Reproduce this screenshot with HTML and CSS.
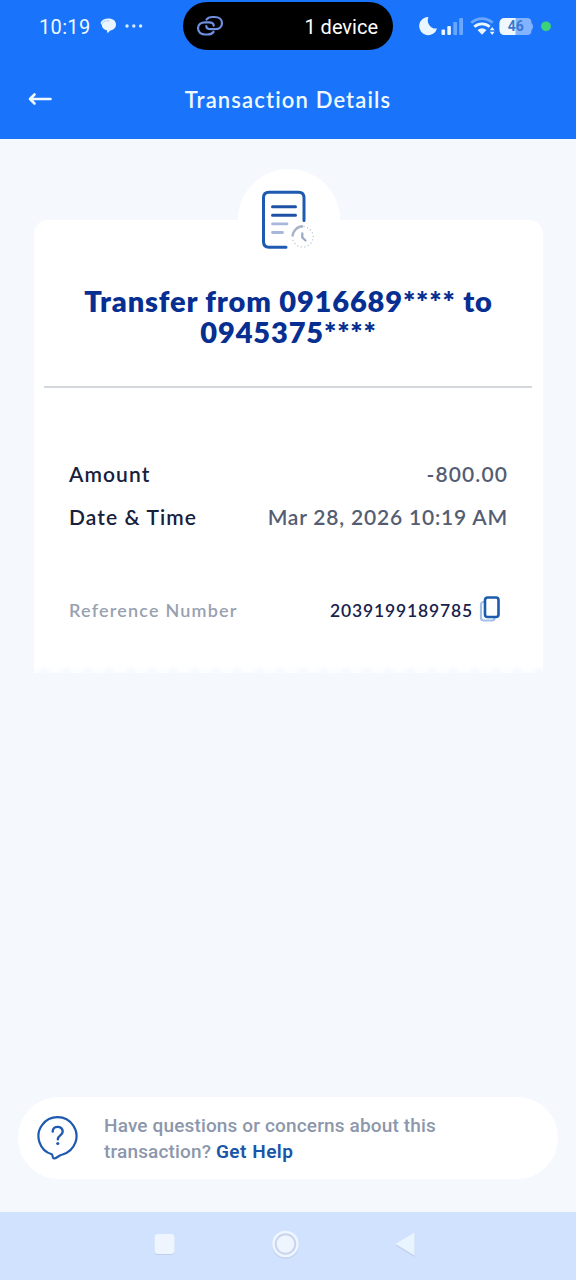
FILE: index.html
```html
<!DOCTYPE html>
<html lang="en">
<head>
<meta charset="utf-8">
<title>Transaction Details</title>
<link rel="stylesheet" href="styles.css">
</head>
<body>
<div class="screen">
  <header class="top">
    <div class="status">
      <div class="status-left">
        <span class="clock">10:19</span>
        <svg class="chat" width="17" height="16" viewBox="0 0 17 16"><path d="M8.5 0.5C12.800 0.500 16 2.800 16 6.500C16 9.800 13.500 12 10.300 12.400L7.600 15.200L6.800 12.300C3.400 11.800 1.800 9.500 1.800 6.800C0.800 6.300 0.500 5.300 0.800 4.300C1.800 1.800 4.800 0.500 8.500 0.500Z" fill="#eaf6ff"/><path d="M1.800 6.500C2.200 3.800 5.200 2.500 9.500 2.800" fill="none" stroke="#8dbaff" stroke-width="0.700"/></svg>
        <svg class="dots" width="18" height="4" viewBox="0 0 18 4" fill="#d8edff"><circle cx="2" cy="2" r="1.700"/><circle cx="8.800" cy="2" r="1.700"/><circle cx="15.600" cy="2" r="1.700"/></svg>
      </div>
      <div class="island">
        <svg width="28" height="22" viewBox="0 0 28 22" fill="none" stroke="#6f8fe0" stroke-width="2.200" stroke-linecap="round"><path d="M10.500 4.500C11.800 2.600 13.800 2 16.500 2H18.500C23 2 26 4.500 26 8.200S23 14.200 19 14.200H15C12 14.200 10.300 13 10.300 11"/><path d="M17.500 17C16.200 18.800 14.200 19.500 11.500 19.500H9.500C5 19.500 2 17 2 13.300S5 7.300 9 7.300H13C16 7.300 17.700 8.800 17.700 10.700"/></svg>
        <span>1 device</span>
      </div>
      <svg class="tray" width="136" height="24" viewBox="0 0 136 24">
        <path d="M11.500 3A9.100 9.100 0 1 0 20 14.500A8.200 8.200 0 0 1 11.500 3Z" fill="#eaf6ff"/>
        <g fill="#eaf6ff"><rect x="24.500" y="15.500" width="3.600" height="5.500" rx="1"/><rect x="30.300" y="12" width="3.600" height="9" rx="1"/></g>
        <g fill="#6ba6ff"><rect x="36.300" y="8" width="3.800" height="13" rx="1"/><rect x="42.200" y="4" width="3.800" height="17" rx="1"/></g>
        <g fill="none" stroke-width="2.800"><path d="M54.300 8.800C60.500 3.200 69.500 3.200 75.700 8.800" stroke="#6ba6ff"/><path d="M57.300 12.700C61.800 8.800 68.200 8.800 72.700 12.700" stroke="#eaf6ff"/></g>
        <path d="M60.500 15.900Q65 12.500 69.500 15.900L65 20.800Z" fill="#eaf6ff"/>
        <path d="M75.200 13L77.600 16.200H72.800ZM75.200 21L72.800 17.800H77.600Z" fill="#eaf6ff"/>
        <path d="M88 4H110Q114.500 4 114.500 8.500V9.200Q116 10 116 12.500T114.500 16V16.500Q114.500 21 110 21H88Q82.500 21 82.500 15.500V9.500Q82.500 4 88 4Z" fill="#83b3ff"/>
        <path d="M88 4H98.500V21H88Q82.500 21 82.500 15.500V9.500Q82.500 4 88 4Z" fill="#eff8ff"/>
        <text class="battery" x="98.700" y="17.300" text-anchor="middle">46</text>
        <circle cx="129" cy="12.300" r="4.900" fill="#3dd179"/>
      </svg>
    </div>
    <div class="appbar">
      <svg class="back" width="25" height="14" viewBox="0 0 25 14" fill="none" stroke="#eefaff" stroke-width="2.600" stroke-linecap="round" stroke-linejoin="round"><path d="M2 7H22.500M6.500 2.500L2 7L6.500 11.500"/></svg>
      <h1 class="title">Transaction Details</h1>
    </div>
  </header>
  <main class="content">
    <section class="receipt">
      <div class="badge">
        <svg width="54" height="60" viewBox="0 0 54 60" fill="none" stroke-linecap="round">
          <path d="M26 58.200H9Q3.500 58.200 3.500 52.500V9Q3.500 3.300 9 3.300H38.500Q44 3.300 44 9V31.500" stroke="#1e5ab0" stroke-width="3"/>
          <path d="M12.500 17.700H35.500M12.500 26.300H35.500" stroke="#1e51a6" stroke-width="3"/>
          <path d="M12.500 34.900H27M12.500 43.500H22.500" stroke="#a9b6dc" stroke-width="2.800"/>
          <path d="M32.500 47.500A10.500 10.500 0 0 1 43 37.300" stroke="#aab4c8" stroke-width="2.400" stroke-linecap="butt"/>
          <path d="M44 37.500A10.300 10.300 0 1 1 32.500 48.500" stroke="#b9c2d2" stroke-width="1.300" stroke-dasharray="0.100 3.500"/>
          <path d="M42.300 44.500V48.500L45.500 51.500" stroke="#9dabc7" stroke-width="2.300"/>
        </svg>
      </div>
      <div class="card">
        <h2 class="heading">Transfer from 0916689**** to<br>0945375****</h2>
        <hr class="rule">
        <dl class="rows">
          <div class="row"><dt>Amount</dt><dd>-800.00</dd></div>
          <div class="row"><dt>Date &amp; Time</dt><dd class="date-value">Mar 28, 2026 10:19 AM</dd></div>
          <div class="row reference"><dt>Reference Number</dt><dd>2039199189785<svg class="copy" width="22" height="28" viewBox="0 0 22 28" fill="none"><rect x="2" y="7" width="13.500" height="18.500" rx="2.500" stroke="#a5bfe9" stroke-width="2.200"/><rect x="6" y="2.500" width="13.500" height="19.500" rx="2.500" fill="#fff" stroke="#1d5bad" stroke-width="2.600"/></svg></dd></div>
        </dl>
      </div>
      <div class="scallop"></div>
    </section>
    <section class="help">
      <svg class="question" width="42" height="46" viewBox="0 0 42 46" fill="none" stroke="#1e5ab0" stroke-width="2.200" stroke-linecap="round" stroke-linejoin="round"><path d="M14.800 39.300A19 19 0 1 1 25.500 39.500C21.800 40.200 19.800 43.200 17 43.500C15.200 43.600 16.200 40.500 14.800 39.300Z"/><path d="M15.700 16.500C15.700 10.300 25.700 10.300 25.700 16.500C25.700 20.500 20.800 20.300 20.800 24.300" stroke-width="2.400"/><circle cx="20.800" cy="28.500" r="1.600" fill="#1e5ab0" stroke="none"/></svg>
      <p class="help-text">Have questions or concerns about this<br>transaction? <a class="link">Get Help</a></p>
    </section>
  </main>
  <nav class="navbar">
    <svg class="nav" width="264" height="32" viewBox="0 0 264 32">
      <g fill="#c0d0eb"><rect x="1.500" y="7" width="20" height="20" rx="3.500"/><circle cx="132.500" cy="17.300" r="13.500"/><path d="M242.500 17.500L261.500 6V29Z"/></g>
      <rect x="1.500" y="6" width="20" height="20" rx="3.500" fill="#eff5fe"/>
      <circle cx="132.500" cy="16" r="13.300" fill="#eff5fe"/><circle cx="132.500" cy="16" r="9.800" fill="#eff5fe" stroke="#c6d5ed" stroke-width="1.900"/>
      <path d="M242.500 16L261.500 4.500V27.500Z" fill="#eaf4ff"/>
    </svg>
  </nav>
</div>
</body>
</html>
```
FILE: styles.css
```css
* { box-sizing: border-box; }
body { margin: 0; font-family: Lato, "Open Sans", sans-serif; background: #f5f9fe; }
h1, h2, p, dl, dd { margin: 0; }
svg { display: block; flex: none; }
.screen { width: 576px; height: 1280px; display: flex; flex-direction: column; }

.top { height: 139px; background: #1a73fb; color: #eefaff; }
.status { height: 52px; display: flex; align-items: center; padding: 0 20px 0 39px; font-family: Roboto, sans-serif; }
.status-left { width: 144px; display: flex; align-items: center; }
.clock { width: 52px; font-size: 20px; letter-spacing: 0.35px; line-height: 24px; padding-top: 2px; }
.chat { margin-left: 9px; }
.dots { margin-left: 8px; }
.island { width: 210px; height: 48px; border-radius: 24px; background: #000; display: flex; align-items: center; justify-content: space-between; padding: 2px 15px 0 13px; font-size: 20px; color: #fff; }
.island svg { margin-top: -2px; }
.tray { margin-left: 24px; }
.battery { font: 700 14px Roboto, sans-serif; fill: #3978cf; }
.appbar { height: 87px; padding: 7px 28px 0; display: grid; grid-template-columns: 25px 1fr 25px; align-items: center; }
.title { font-size: 22px; font-weight: 600; letter-spacing: 1.15px; text-align: center; line-height: 30px; padding-top: 2px; }

.content { flex: 1; display: flex; flex-direction: column; justify-content: space-between; padding: 30px 18px 33px; }
.receipt { margin: 0 15px 0 16px; }
.badge { width: 102px; height: 102px; border-radius: 50%; background: #fff; margin: 0 auto -51px; position: relative; padding: 20px 0 0 22px; }
.card { height: 446px; background: #fff; border-radius: 14px 14px 0 0; padding: 65px 35px 0; }
.heading { margin: 0 -10px; text-align: center; white-space: nowrap; color: #062f91; font-size: 29px; line-height: 31px; font-weight: 800; letter-spacing: 0.85px; }
.rule { margin: 39px -24px 0 -25px; border: 0; height: 2px; background: #d4d7db; }
.rows { padding-top: 64px; }
.row { display: flex; justify-content: space-between; align-items: center; height: 43px; font-size: 21px; color: #17213c; font-weight: 600; letter-spacing: 1.1px; white-space: nowrap; }
.row dd { color: #545d71; }
.row .date-value { letter-spacing: 0.8px; }
.reference { margin-top: 50px; font-size: 18px; color: #98a1b0; letter-spacing: 1.2px; }
.row.reference dd { color: #17214d; display: flex; align-items: center; padding: 1px 7px 0 0; font-size: 17.500px; letter-spacing: 0.85px; }
.copy { margin: -3px 0 0 6px; }
.scallop { height: 7px; background: radial-gradient(circle at 10.500px 7px, #f7fafe 3.500px, #fdfeff 7px) 0 0 / 21.500px 7px repeat-x; }

.help { height: 82px; border-radius: 41px; background: #fff; display: flex; align-items: center; padding-left: 19px; }
.question { margin-top: -1px; }
.help-text { margin: 2px 0 0 25px; font: 500 19px/26px Roboto, sans-serif; letter-spacing: 0.150px; color: #8c97ab; white-space: nowrap; }
.link { color: #1756a9; font-weight: 600; letter-spacing: 0.500px; }
.navbar { height: 68px; background: #d1e2fe; padding: 16px 0 0 153px; }
```
